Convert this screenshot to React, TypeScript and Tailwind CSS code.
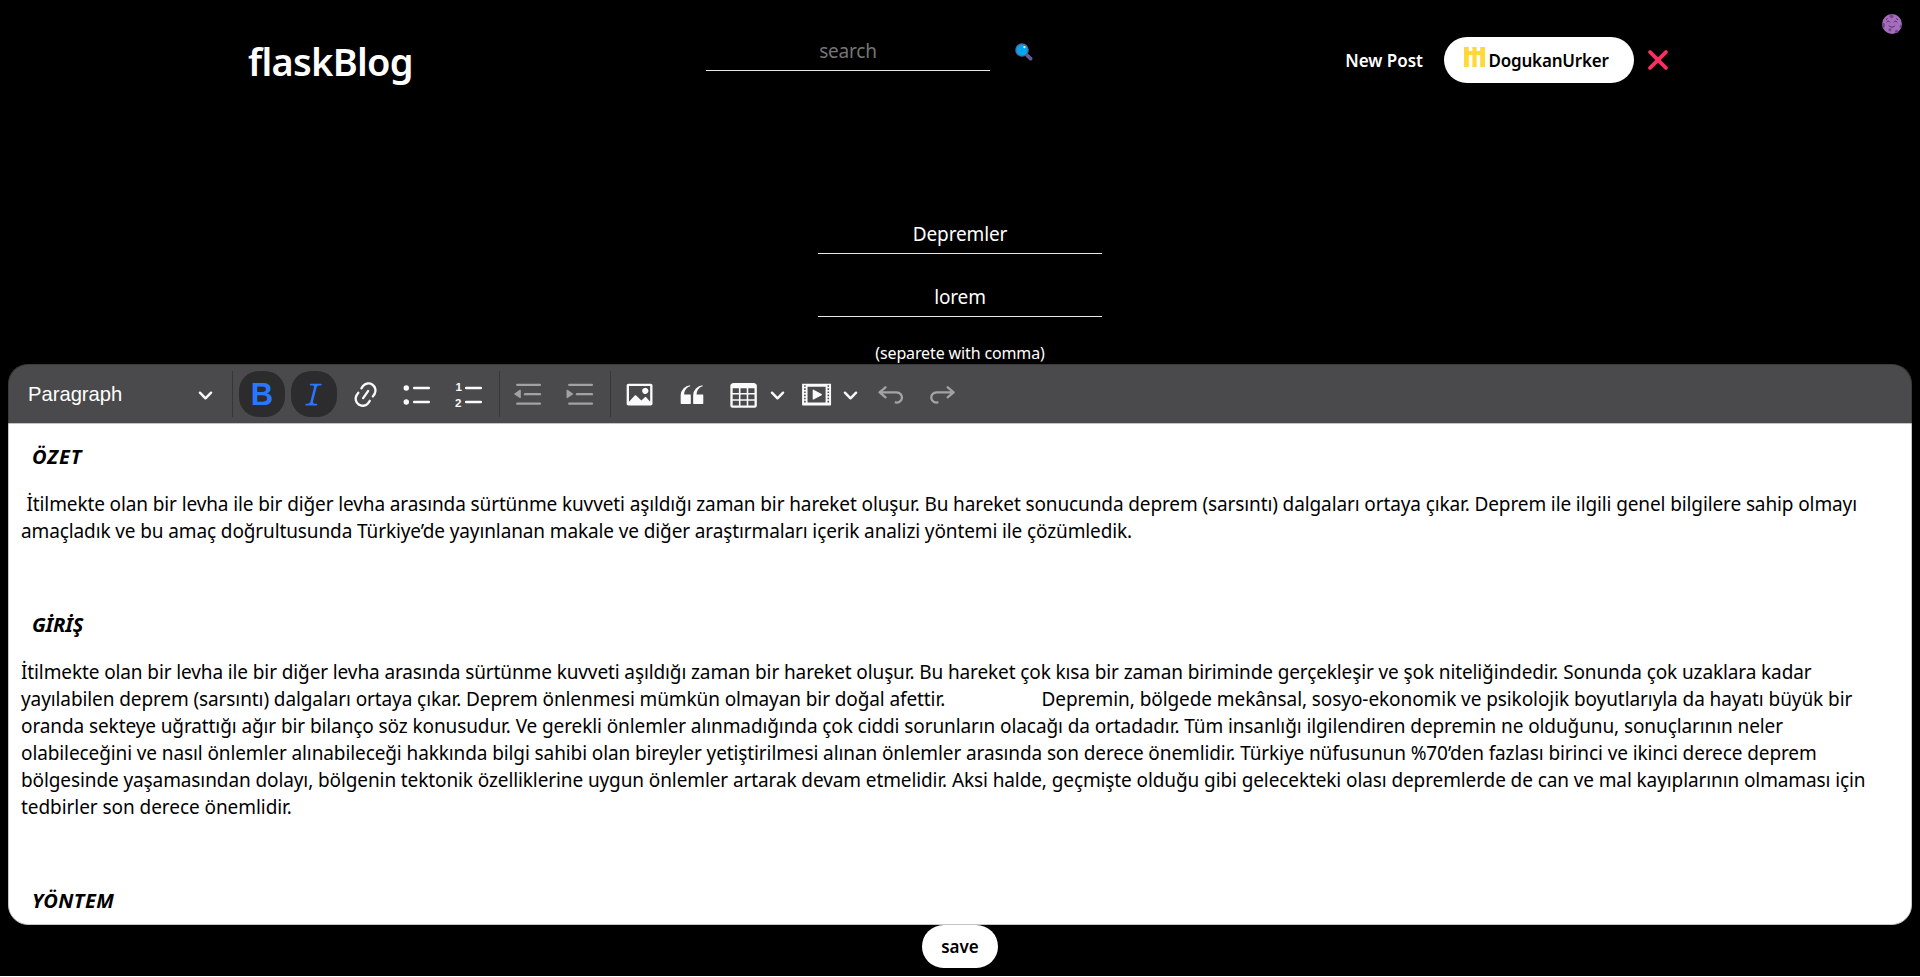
import type { ReactNode } from 'react';

function Icon({ children, dim }: { children: ReactNode; dim?: boolean }) {
  return (
    <svg
      viewBox="0 0 20 20"
      fill="currentColor"
      className={dim ? 'mt-px size-[31.2px] shrink-0 opacity-50' : 'mt-px size-[31.2px] shrink-0'}
    >
      {children}
    </svg>
  );
}

function ToolButton({ children, active }: { children: ReactNode; active?: boolean }) {
  return (
    <button
      className={
        active
          ? 'flex size-[46px] shrink-0 items-center justify-center rounded-[20px] bg-[#2c2c2e] text-[#2977ff]'
          : 'flex size-[46px] shrink-0 items-center justify-center rounded-[20px] text-[#fafafa]'
      }
    >
      {children}
    </button>
  );
}

function Chevron() {
  return (
    <svg viewBox="0 0 14 14" className="size-[15px] shrink-0 text-[#fafafa]" fill="none" stroke="currentColor" strokeWidth="2.3" strokeLinecap="round" strokeLinejoin="round">
      <path d="M1.8 4.4 7 9.6l5.2-5.2" />
    </svg>
  );
}

function SplitArrow() {
  return (
    <button className="flex h-[46px] w-[20px] items-center justify-center pt-[2px]">
      <Chevron />
    </button>
  );
}

function Separator() {
  return <div className="h-[46px] w-px shrink-0 bg-[#363638]" />;
}

function Toolbar() {
  return (
    <div className="flex h-[59px] items-center gap-[6px] rounded-t-[20px] border border-b-0 border-[#3a3a3c] bg-[#4a4a4c] pl-[19px]">
      <button className="mr-[13px] flex w-[185px] items-center justify-between">
        <span className="font-['Liberation_Sans',sans-serif] text-[20.2px] leading-[30px] text-white">Paragraph</span>
        <span className="pt-[2px]">
          <Chevron />
        </span>
      </button>
      <div className="flex items-center gap-[6px]">
        <Separator />
        <ToolButton active>
          <span className="mt-px font-['Liberation_Sans',sans-serif] text-[31px] leading-[46px] font-bold">B</span>
        </ToolButton>
        <ToolButton active>
          <Icon>
            <path d="m9.586 14.633.021.004c-.036.335.095.655.393.962.082.083.173.15.274.201h1.474a.6.6 0 1 1 0 1.2H5.304a.6.6 0 0 1 0-1.2h1.15c.474-.07.809-.182 1.005-.334.157-.122.291-.32.404-.597l2.416-9.55a1.053 1.053 0 0 0-.281-.823 1.12 1.12 0 0 0-.442-.296H8.15a.6.6 0 0 1 0-1.2h6.443a.6.6 0 1 1 0 1.2h-1.195c-.376.056-.65.155-.823.296-.215.175-.423.439-.623.79l-2.366 9.347z" />
          </Icon>
        </ToolButton>
        <ToolButton>
          <Icon>
            <path d="m11.077 15 .991-1.416a.75.75 0 1 1 1.229.86l-1.148 1.64a.748.748 0 0 1-.217.206 5.251 5.251 0 0 1-8.503-5.955.741.741 0 0 1 .12-.274l1.147-1.639a.75.75 0 1 1 1.228.86L4.933 10.7l.006.003a3.75 3.75 0 0 0 6.132 4.294l.006.004zm5.494-5.335a.748.748 0 0 1-.12.274l-1.147 1.639a.75.75 0 1 1-1.228-.86l.86-1.23a3.75 3.75 0 0 0-6.144-4.301l-.86 1.229a.75.75 0 0 1-1.229-.86l1.148-1.64a.748.748 0 0 1 .217-.206 5.251 5.251 0 0 1 8.503 5.955zm-4.563-2.532a.75.75 0 0 1 .184 1.045l-3.155 4.505a.75.75 0 1 1-1.229-.86l3.155-4.506a.75.75 0 0 1 1.045-.184z" />
          </Icon>
        </ToolButton>
        <ToolButton>
          <Icon>
            <rect x="7" y="5" width="11" height="1.5" rx=".75" />
            <rect x="7" y="14" width="11" height="1.5" rx=".75" />
            <circle cx="2.75" cy="5.75" r="1.75" />
            <circle cx="2.75" cy="14.75" r="1.75" />
          </Icon>
        </ToolButton>
        <ToolButton>
          <Icon>
            <rect x="7" y="5" width="11" height="1.5" rx=".75" />
            <rect x="7" y="14" width="11" height="1.5" rx=".75" />
            <text x="0.9" y="8" fontSize="7.4" fontWeight="700" fontFamily="Liberation Sans, sans-serif">1</text>
            <text x="0.7" y="18" fontSize="7.4" fontWeight="700" fontFamily="Liberation Sans, sans-serif">2</text>
          </Icon>
        </ToolButton>
        <Separator />
        <ToolButton>
          <Icon dim>
            <rect x="2" y="3" width="16" height="1.5" rx=".75" />
            <rect x="7" y="9" width="11" height="1.5" rx=".75" />
            <rect x="2" y="15" width="16" height="1.5" rx=".75" />
            <path d="M4.37 6.95.98 9.358a.4.4 0 0 0 .013.661l3.39 2.207A.4.4 0 0 0 5 11.892V7.275a.4.4 0 0 0-.63-.326z" />
          </Icon>
        </ToolButton>
        <ToolButton>
          <Icon dim>
            <rect x="2" y="3" width="16" height="1.5" rx=".75" />
            <rect x="7" y="9" width="11" height="1.5" rx=".75" />
            <rect x="2" y="15" width="16" height="1.5" rx=".75" />
            <path d="M1.632 6.95 5.02 9.358a.4.4 0 0 1-.013.661l-3.39 2.207A.4.4 0 0 1 1 11.892V7.275a.4.4 0 0 1 .632-.326z" />
          </Icon>
        </ToolButton>
        <Separator />
        <ToolButton>
          <Icon>
            <path d="M6.91 10.54c.26-.23.64-.21.88.03l3.36 3.14 2.23-2.06a.64.64 0 0 1 .87 0l2.52 2.97V4.5H3.2v10.12l3.71-4.08zm10.27-7.51c.6 0 1.09.47 1.09 1.05v11.84c0 .59-.49 1.06-1.09 1.06H2.79c-.6 0-1.09-.47-1.09-1.06V4.08c0-.58.49-1.05 1.1-1.05h14.38zm-5.22 5.56a1.96 1.96 0 1 1 3.4-1.96 1.96 1.96 0 0 1-3.4 1.96z" />
          </Icon>
        </ToolButton>
        <ToolButton>
          <Icon>
            <path d="M3 10.423a6.5 6.5 0 0 1 6.056-6.408l.038.67C6.448 5.423 5.354 7.663 5.22 10H9c.552 0 .5.432.5.986v4.511c0 .554-.448.503-1 .503h-5c-.552 0-.5-.449-.5-1.003v-4.574zm8 0a6.5 6.5 0 0 1 6.056-6.408l.038.67c-2.646.739-3.74 2.979-3.873 5.315H17c.552 0 .5.432.5.986v4.511c0 .554-.448.503-1 .503h-5c-.552 0-.5-.449-.5-1.003v-4.574z" />
          </Icon>
        </ToolButton>
        <div className="flex">
          <ToolButton>
            <Icon>
              <path d="M3 6v3h4V6H3zm0 4v3h4v-3H3zm0 4v3h4v-3H3zm5 3h4v-3H8v3zm5 0h4v-3h-4v3zm4-4v-3h-4v3h4zm0-4V6h-4v3h4zm1.5 8a1.5 1.5 0 0 1-1.5 1.5H3A1.5 1.5 0 0 1 1.5 17V4c.222-.863 1.068-1.5 2-1.5h13c.932 0 1.778.637 2 1.5v13zM12 13v-3H8v3h4zm0-4V6H8v3h4z" />
            </Icon>
          </ToolButton>
          <SplitArrow />
        </div>
        <div className="ml-px flex">
          <ToolButton>
            <Icon>
              <path d="M18.68 3.03c.6 0 .59-.03.59.55v12.84c0 .59.01.56-.59.56H1.29c-.6 0-.59.03-.59-.56V3.58c0-.58-.01-.55.6-.55h17.38zM15.77 15V5H4.2v10h11.57zM2 4v1h1V4H2zm0 2v1h1V6H2zm0 2v1h1V8H2zm0 2v1h1v-1H2zm0 2v1h1v-1H2zm0 2v1h1v-1H2zM17 4v1h1V4h-1zm0 2v1h1V6h-1zm0 2v1h1V8h-1zm0 2v1h1v-1h-1zm0 2v1h1v-1h-1zm0 2v1h1v-1h-1zM7.5 7.177a.4.4 0 0 1 .593-.351l5.133 2.824a.4.4 0 0 1 0 .7l-5.133 2.824a.4.4 0 0 1-.593-.35V7.176v.001z" />
            </Icon>
          </ToolButton>
          <SplitArrow />
        </div>
        <div className="ml-[2px] flex gap-[6px]">
          <ToolButton>
            <Icon dim>
              <path d="m5.042 9.367 2.189 1.837a.75.75 0 0 1-.965 1.149l-3.788-3.18a.747.747 0 0 1-.21-.284.75.75 0 0 1 .17-.945L6.23 4.762a.75.75 0 1 1 .964 1.15L4.863 7.866h8.917A.75.75 0 0 1 14 7.9a4 4 0 1 1-1.477 7.718l.344-1.489a2.5 2.5 0 1 0 1.094-4.73l.008-.032H5.042z" />
            </Icon>
          </ToolButton>
          <ToolButton>
            <Icon dim>
              <path d="m14.958 9.367-2.189 1.837a.75.75 0 0 0 .965 1.149l3.788-3.18a.747.747 0 0 0 .21-.284.75.75 0 0 0-.17-.945L13.77 4.762a.75.75 0 1 0-.964 1.15l2.331 1.955H6.22A.75.75 0 0 0 6 7.9a4 4 0 1 0 1.477 7.718l-.344-1.489A2.5 2.5 0 1 1 6.039 9.4l-.008-.032h8.927z" />
            </Icon>
          </ToolButton>
        </div>
      </div>
    </div>
  );
}

function Header() {
  return (
    <header className="flex h-[219px] items-start">
      <h1 className="mt-[35px] ml-[248px] w-[458px] text-[38px] leading-[52px] font-semibold tracking-[-0.7px]">flaskBlog</h1>
      <div className="mt-[36px] flex w-[738px]">
        <input
          placeholder="search"
          className="h-[35px] w-[284px] border-b border-[#e8e8e8] bg-transparent pt-px pb-[5px] text-center text-[19px] leading-[28px] tracking-[-0.2px] outline-none placeholder:text-[#757575]"
        />
        <svg viewBox="0 0 18 18" className="mt-[7px] ml-[25px] size-[18px]">
          <path d="m12.4 12.6 3.2 3" stroke="#635994" strokeWidth="3.8" strokeLinecap="round" />
          <circle cx="7" cy="7" r="6.2" fill="#00a6ed" stroke="#635994" strokeWidth="1.2" />
          <circle cx="9.4" cy="4.2" r="1.1" fill="#e8f8ff" />
        </svg>
        <a className="mt-[14px] ml-auto pr-[21px] text-[17px] leading-[22px] font-semibold">New Post</a>
      </div>
      <button className="mt-[37px] flex h-[46px] w-[190px] rounded-[23px] bg-white pl-[19.5px] text-black">
        <svg viewBox="0 0 5 5" className="mt-[10px] h-[20px] w-[21px]" fill="#ffd93b" preserveAspectRatio="none">
          <path d="M0 0h1.15v1H2V0h1v1h.85V0H5v5H3.85V2H3v3H2V2h-.85v3H0z" />
        </svg>
        <span className="mt-[13px] ml-[4px] text-[17px] leading-[22px] font-semibold tracking-[-0.2px]">DogukanUrker</span>
      </button>
      <svg viewBox="0 0 20 20" className="mt-[50px] ml-[14px] size-[20px]" stroke="#f92f60" strokeWidth="3.8" strokeLinecap="round">
        <path d="m2.1 2.1 15.8 15.8M17.9 2.1 2.1 17.9" />
      </svg>
      <svg viewBox="0 0 20 20" className="mt-[14px] mr-[18px] ml-auto size-[20px]">
        <circle cx="10" cy="10" r="9.9" fill="#a56ebd" />
        <g fill="#77468f">
          <circle cx="9.5" cy="2.2" r="2" />
          <path d="M.3 8.8c2-.4 3 .8 2.8 2.7-.2 1.5-1.2 2.4-2.2 2.3A9.9 9.9 0 0 1 .3 8.8z" />
          <circle cx="8" cy="15.8" r="1.6" />
          <circle cx="14.6" cy="17.4" r="1.7" />
          <path d="M19.6 10.5c-1.5-.2-2.3.8-1.9 2.4.2.5.6.9 1.1 1a9.9 9.9 0 0 0 .8-3.4z" />
        </g>
        <g fill="none" stroke="#4a2a66" strokeWidth="1" strokeLinecap="round">
          <path d="M4.8 8c.6-1.3 2.3-1.3 2.9 0M12 8c.6-1.3 2.3-1.3 2.9 0M7 11.8c1.6 1.8 4.2 1.8 5.8 0" />
          <path d="M5.2 4.8 4.2 5.5M14.5 4.8l1 .7" />
        </g>
      </svg>
    </header>
  );
}

const heading = 'pl-[11px] text-[20px] font-bold italic';

export default function App() {
  return (
    <div className="flex h-[977px] w-full flex-col overflow-hidden bg-white font-['Noto_Sans','Open_Sans',sans-serif]">
      <div className="h-[976px] bg-black text-white">
        <Header />
        <div className="flex flex-col items-center">
          <input
            defaultValue="Depremler"
            className="h-[35px] w-[284px] border-b border-[#e8e8e8] bg-transparent pt-px pb-[5px] text-center text-[19px] leading-[28px] tracking-[-0.15px] outline-none"
          />
          <input
            defaultValue="lorem"
            className="mt-[28px] h-[35px] w-[284px] border-b border-[#e8e8e8] bg-transparent pt-px pb-[5px] text-center text-[19px] leading-[28px] tracking-[-0.15px] outline-none"
          />
          <p className="mt-[25px] text-[16px] leading-[22px] tracking-[-0.13px]">(separete with comma)</p>
        </div>
        <div className="mx-[8px]">
          <Toolbar />
          <div className="h-[502px] overflow-hidden rounded-b-[20px] border border-[#c4c4c4] bg-white pt-[19px] pl-[12px] text-[19px] leading-[27px] whitespace-nowrap text-black">
            <p className={heading + ' tracking-[0.9px]'}>ÖZET</p>
            <div className="mt-[21px]">
              <p className="pl-[5.5px] tracking-[-0.115px]">
                İtilmekte olan bir levha ile bir diğer levha arasında sürtünme kuvveti aşıldığı zaman bir hareket oluşur. Bu hareket sonucunda deprem (sarsıntı) dalgaları ortaya çıkar. Deprem ile ilgili genel bilgilere sahip olmayı
              </p>
              <p className="tracking-[-0.116px]">
                amaçladık ve bu amaç doğrultusunda Türkiye’de yayınlanan makale ve diğer araştırmaları içerik analizi yöntemi ile çözümledik.
              </p>
            </div>
            <p className={heading + ' mt-[66px] tracking-[-0.2px]'}>GİRİŞ</p>
            <div className="mt-[21px]">
              <p className="tracking-[-0.112px]">
                İtilmekte olan bir levha ile bir diğer levha arasında sürtünme kuvveti aşıldığı zaman bir hareket oluşur. Bu hareket çok kısa bir zaman biriminde gerçekleşir ve şok niteliğindedir. Sonunda çok uzaklara kadar
              </p>
              <p className="flex">
                <span className="w-[1020.5px] tracking-[-0.1px]">
                  yayılabilen deprem (sarsıntı) dalgaları ortaya çıkar. Deprem önlenmesi mümkün olmayan bir doğal afettir.
                </span>
                <span className="tracking-[-0.075px]">
                  Depremin, bölgede mekânsal, sosyo-ekonomik ve psikolojik boyutlarıyla da hayatı büyük bir
                </span>
              </p>
              <p className="tracking-[-0.098px]">
                oranda sekteye uğrattığı ağır bir bilanço söz konusudur. Ve gerekli önlemler alınmadığında çok ciddi sorunların olacağı da ortadadır. Tüm insanlığı ilgilendiren depremin ne olduğunu, sonuçlarının neler
              </p>
              <p className="tracking-[-0.104px]">
                olabileceğini ve nasıl önlemler alınabileceği hakkında bilgi sahibi olan bireyler yetiştirilmesi alınan önlemler arasında son derece önemlidir. Türkiye nüfusunun %70’den fazlası birinci ve ikinci derece deprem
              </p>
              <p className="tracking-[-0.102px]">
                bölgesinde yaşamasından dolayı, bölgenin tektonik özelliklerine uygun önlemler artarak devam etmelidir. Aksi halde, geçmişte olduğu gibi gelecekteki olası depremlerde de can ve mal kayıplarının olmaması için
              </p>
              <p className="tracking-[-0.06px]">tedbirler son derece önemlidir.</p>
            </div>
            <p className={heading + ' mt-[66px] tracking-[0.4px]'}>YÖNTEM</p>
          </div>
        </div>
        <div className="flex justify-center">
          <button className="h-[43px] w-[76px] rounded-[21.5px] bg-white text-[17px] leading-[22px] font-semibold text-black">save</button>
        </div>
      </div>
    </div>
  );
}
